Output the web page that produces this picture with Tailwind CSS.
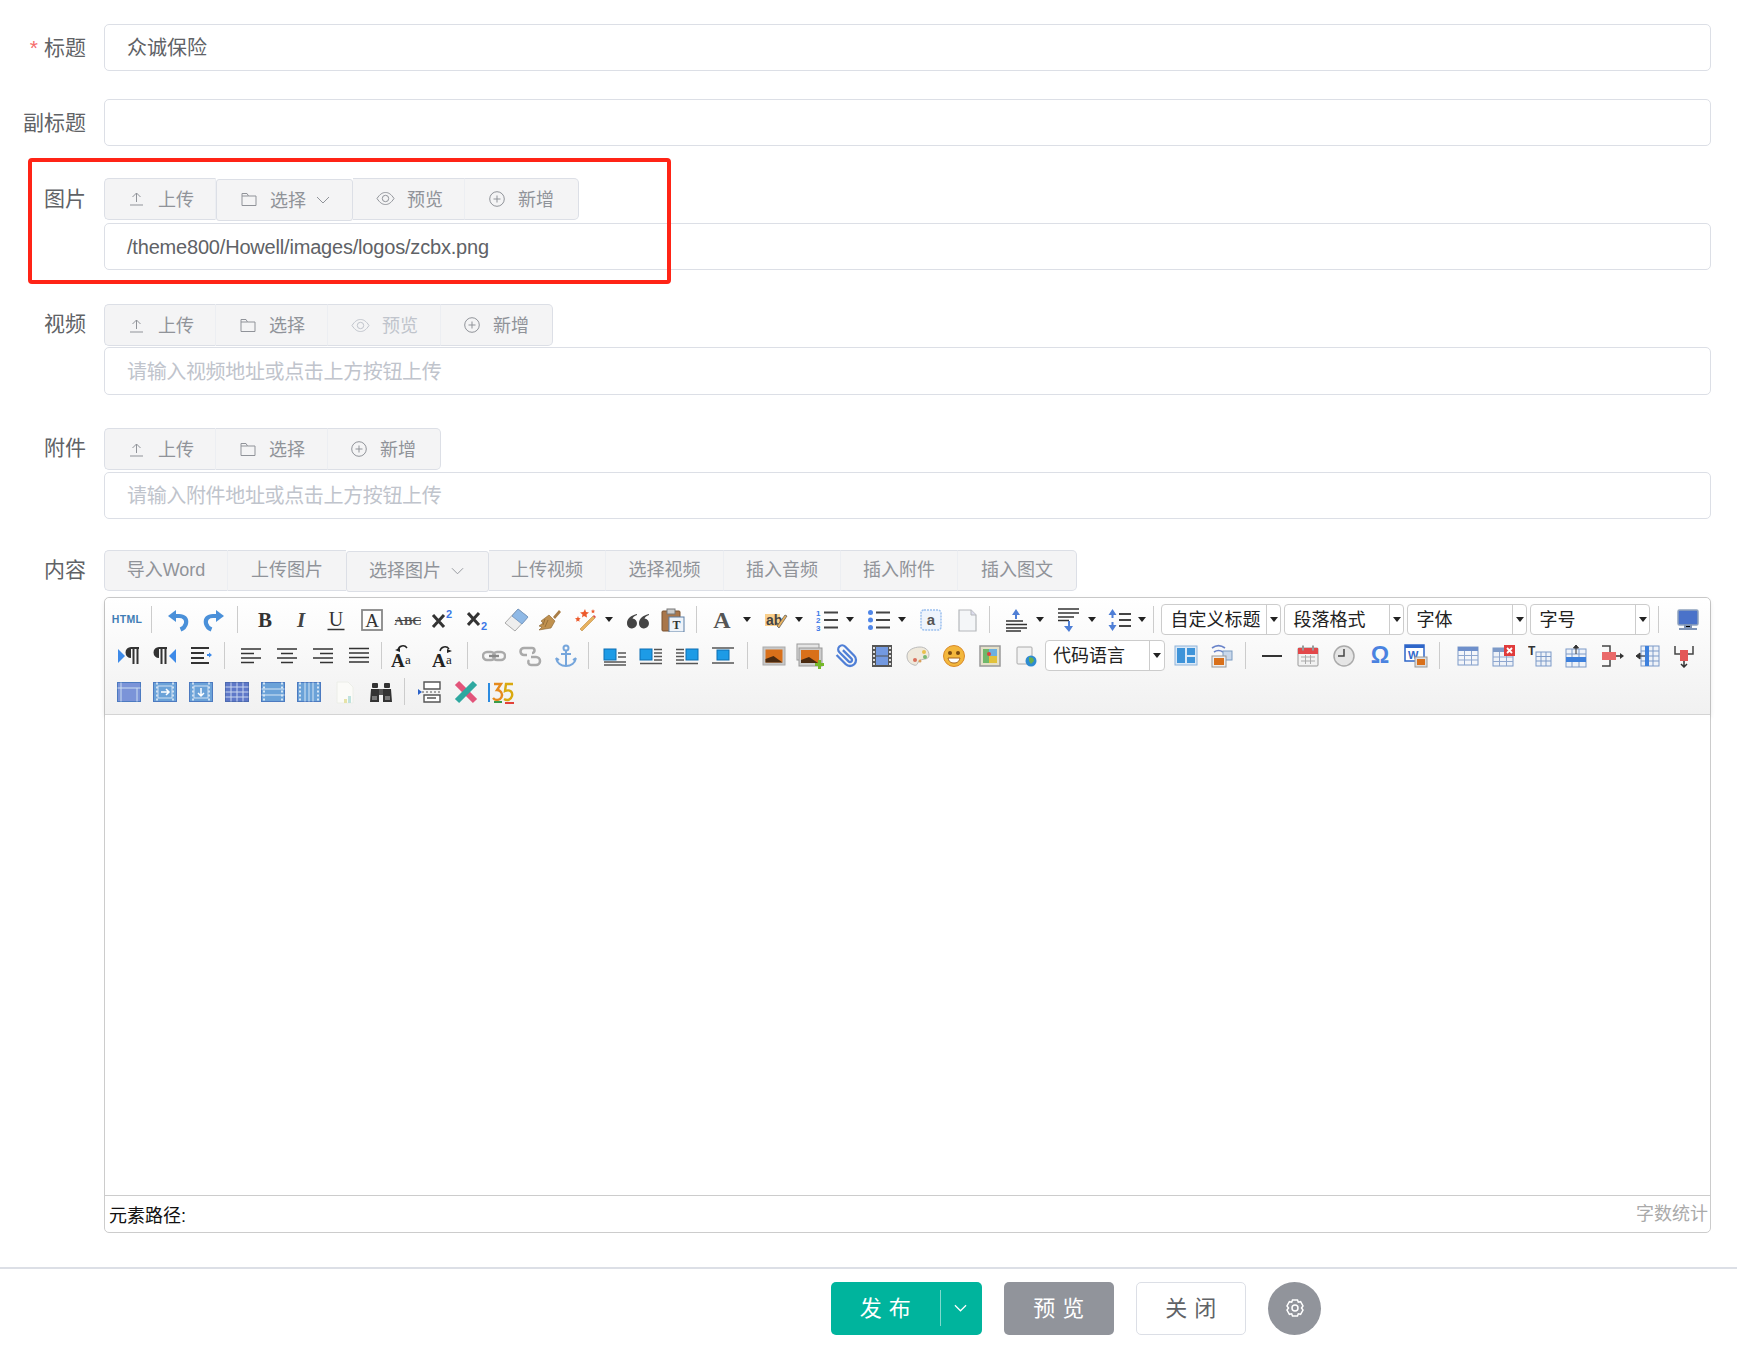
<!DOCTYPE html>
<html lang="zh-CN">
<head>
  <meta charset="UTF-8" />
  <title>编辑内容</title>
  <script src="https://cdn.jsdelivr.net/npm/@tailwindcss/browser@4"></script>
</head>
<body class="bg-white h-[1347px] overflow-hidden [font-family:'Liberation_Sans','Noto_Sans_CJK_SC',sans-serif]">

<main class="pr-[26px] pt-[23.5px]">

  <!-- 标题 -->
  <div class="flex">
    <label class="shrink-0 w-[86px] text-right text-[21px] leading-[47px] text-[#606266]"><span class="text-[#f56c6c] mr-[6px]">*</span>标题</label>
    <div class="ml-[18px] flex-1 min-w-0 h-[47px] border border-[#dcdfe6] rounded-[5px] pl-[22px] text-[20px] leading-[46px] text-[#606266]">众诚保险</div>
  </div>

  <!-- 副标题 -->
  <div class="flex mt-[28.5px]">
    <label class="shrink-0 w-[86px] text-right text-[21px] leading-[47px] text-[#606266]">副标题</label>
    <div class="ml-[18px] flex-1 min-w-0 h-[47px] border border-[#dcdfe6] rounded-[5px]"></div>
  </div>

  <!-- 图片 -->
  <div class="relative flex mt-[31.5px]">
    <div class="absolute left-[28px] -top-[20px] w-[643px] h-[126px] border-[4px] border-[#ff2416] rounded-[4px] pointer-events-none"></div>
    <label class="shrink-0 w-[86px] text-right text-[21px] leading-[42px] text-[#606266]">图片</label>
    <div class="ml-[18px] flex-1 min-w-0">
      <div class="flex h-[42px] text-[18px] text-[#909399]">
        <button class="flex items-center w-[112px] pl-[24px] bg-[#f4f4f5] border border-[#dcdfe6] border-r-[#eceef2] rounded-l-[5px]">
          <svg class="w-[15px] h-[15px] mr-[14px]" viewBox="0 0 15 15" fill="none" stroke="#909399"><path d="M1 14h13M7.5 11V2M3.500 6l4-4 4 4"/></svg><span class="mt-[4px]">上传</span></button>
        <button class="flex items-center w-[137px] pl-[24px] translate-y-px bg-[#f4f4f5] border border-[#dcdfe6] rounded-[3px]">
          <svg class="w-[16px] h-[15px] mr-[13px]" viewBox="0 0 16 15" fill="none" stroke="#909399"><path d="M1 13.500V1.500h5l1.500 2.500h7.500v9.500zM1 4h6.500"/></svg><span class="mt-[4px]">选择</span>
          <svg class="w-[14px] h-[8px] ml-[10px]" viewBox="0 0 14 8" fill="none" stroke="#909399"><path d="M1 1l6 6 6-6"/></svg></button>
        <button class="flex items-center w-[112px] pl-[23px] bg-[#f4f4f5] border-y border-r border-[#dcdfe6] border-r-[#eceef2]">
          <svg class="w-[19px] h-[15px] mr-[12px]" viewBox="0 0 19 15" fill="none" stroke="#909399"><path d="M1 7.500C4 3 6.500 1.500 9.500 1.500S15 3 18 7.500C15 12 12.500 13.500 9.500 13.500S4 12 1 7.500z"/><circle cx="9.500" cy="7.500" r="3.200"/></svg><span class="mt-[4px]">预览</span></button>
        <button class="flex items-center w-[114px] pl-[24px] bg-[#f4f4f5] border-y border-r border-[#dcdfe6] rounded-r-[5px]">
          <svg class="w-[16px] h-[16px] mr-[13px]" viewBox="0 0 16 16" fill="none" stroke="#909399"><circle cx="8" cy="8" r="7.300"/><path d="M8 4.500v7M4.500 8h7"/></svg><span class="mt-[4px]">新增</span></button>
      </div>
      <div class="mt-[3.5px] h-[47px] border border-[#dcdfe6] rounded-[5px] pl-[22px] text-[20px] tracking-[-0.19px] leading-[46px] text-[#606266]">/theme800/Howell/images/logos/zcbx.png</div>
    </div>
  </div>

  <!-- 视频 -->
  <div class="flex mt-[34px]">
    <label class="shrink-0 w-[86px] text-right text-[21px] leading-[40px] text-[#606266]">视频</label>
    <div class="ml-[18px] flex-1 min-w-0">
      <div class="flex h-[42px] text-[18px] text-[#909399]">
        <button class="flex items-center w-[112px] pl-[24px] bg-[#f4f4f5] border border-[#dcdfe6] border-r-[#eceef2] rounded-l-[5px]">
          <svg class="w-[15px] h-[15px] mr-[14px]" viewBox="0 0 15 15" fill="none" stroke="#909399"><path d="M1 14h13M7.500 11V2M3.500 6l4-4 4 4"/></svg><span class="mt-[2px]">上传</span></button>
        <button class="flex items-center w-[112px] pl-[24px] bg-[#f4f4f5] border-y border-r border-[#dcdfe6] border-r-[#eceef2]">
          <svg class="w-[16px] h-[15px] mr-[13px]" viewBox="0 0 16 15" fill="none" stroke="#909399"><path d="M1 13.500V1.500h5l1.500 2.500h7.500v9.500zM1 4h6.500"/></svg><span class="mt-[2px]">选择</span></button>
        <button class="flex items-center w-[113px] pl-[23px] bg-[#f4f4f5] border-y border-r border-[#dcdfe6] border-r-[#eceef2] text-[#c0c4cc]">
          <svg class="w-[19px] h-[15px] mr-[12px]" viewBox="0 0 19 15" fill="none" stroke="#c0c4cc"><path d="M1 7.500C4 3 6.500 1.500 9.500 1.500S15 3 18 7.500C15 12 12.500 13.500 9.500 13.500S4 12 1 7.500z"/><circle cx="9.500" cy="7.500" r="3.200"/></svg><span class="mt-[2px]">预览</span></button>
        <button class="flex items-center w-[112px] pl-[23px] bg-[#f4f4f5] border-y border-r border-[#dcdfe6] rounded-r-[5px]">
          <svg class="w-[16px] h-[16px] mr-[13px]" viewBox="0 0 16 16" fill="none" stroke="#909399"><circle cx="8" cy="8" r="7.300"/><path d="M8 4.500v7M4.500 8h7"/></svg><span class="mt-[2px]">新增</span></button>
      </div>
      <div class="mt-px h-[47.5px] border border-[#dcdfe6] rounded-[5px] pl-[22px] text-[20px] tracking-[-0.35px] leading-[48px] text-[#c0c4cc]">请输入视频地址或点击上方按钮上传</div>
    </div>
  </div>

  <!-- 附件 -->
  <div class="flex mt-[33.5px]">
    <label class="shrink-0 w-[86px] text-right text-[21px] leading-[40px] text-[#606266]">附件</label>
    <div class="ml-[18px] flex-1 min-w-0">
      <div class="flex h-[42px] text-[18px] text-[#909399]">
        <button class="flex items-center w-[112px] pl-[24px] bg-[#f4f4f5] border border-[#dcdfe6] border-r-[#eceef2] rounded-l-[5px]">
          <svg class="w-[15px] h-[15px] mr-[14px]" viewBox="0 0 15 15" fill="none" stroke="#909399"><path d="M1 14h13M7.500 11V2M3.500 6l4-4 4 4"/></svg><span class="mt-[2px]">上传</span></button>
        <button class="flex items-center w-[112px] pl-[24px] bg-[#f4f4f5] border-y border-r border-[#dcdfe6] border-r-[#eceef2]">
          <svg class="w-[16px] h-[15px] mr-[13px]" viewBox="0 0 16 15" fill="none" stroke="#909399"><path d="M1 13.500V1.500h5l1.500 2.500h7.500v9.500zM1 4h6.500"/></svg><span class="mt-[2px]">选择</span></button>
        <button class="flex items-center w-[113px] pl-[23px] bg-[#f4f4f5] border-y border-r border-[#dcdfe6] rounded-r-[5px]">
          <svg class="w-[16px] h-[16px] mr-[13px]" viewBox="0 0 16 16" fill="none" stroke="#909399"><circle cx="8" cy="8" r="7.300"/><path d="M8 4.500v7M4.500 8h7"/></svg><span class="mt-[2px]">新增</span></button>
      </div>
      <div class="mt-[1.5px] h-[47px] border border-[#dcdfe6] rounded-[5px] pl-[22px] text-[20px] tracking-[-0.35px] leading-[46px] text-[#c0c4cc]">请输入附件地址或点击上方按钮上传</div>
    </div>
  </div>

  <!-- 内容 -->
  <div class="flex mt-[31px]">
    <label class="shrink-0 w-[86px] text-right text-[21px] leading-[40px] text-[#606266]">内容</label>
    <div class="ml-[18px] flex-1 min-w-0">
      <div class="flex h-[41px] text-[18px] text-[#909399]">
        <button class="w-[124px] bg-[#f4f4f5] border border-[#dcdfe6] border-r-[#eceef2] rounded-l-[5px]">导入Word</button>
        <button class="w-[118px] bg-[#f4f4f5] border-y border-[#dcdfe6]">上传图片</button>
        <button class="flex items-center w-[143px] pl-[22px] translate-y-px bg-[#f4f4f5] border border-[#dcdfe6] rounded-[3px]">选择图片
          <svg class="w-[13px] h-[8px] ml-[10px]" viewBox="0 0 14 8" fill="none" stroke="#909399"><path d="M1 1l6 6 6-6"/></svg></button>
        <button class="w-[117px] bg-[#f4f4f5] border-y border-r border-[#dcdfe6] border-r-[#eceef2]">上传视频</button>
        <button class="w-[118px] bg-[#f4f4f5] border-y border-r border-[#dcdfe6] border-r-[#eceef2]">选择视频</button>
        <button class="w-[117px] bg-[#f4f4f5] border-y border-r border-[#dcdfe6] border-r-[#eceef2]">插入音频</button>
        <button class="w-[117px] bg-[#f4f4f5] border-y border-r border-[#dcdfe6] border-r-[#eceef2]">插入附件</button>
        <button class="w-[119px] bg-[#f4f4f5] border-y border-r border-[#dcdfe6] rounded-r-[5px]">插入图文</button>
      </div>

      <!-- UEditor -->
      <div class="mt-[6px] h-[636px] flex flex-col border border-[#ccc] rounded-[5px]">
        <div class="h-[117px] pl-[4px] pt-[4px] rounded-t-[5px] bg-gradient-to-b from-white to-[#f1f1f1] border-b border-[#d4d4d4] shadow-[0_2px_5px_rgba(0,0,0,0.12)]">

          <!-- row 1 -->
          <div class="flex items-center h-[36px]">
            <span class="flex w-[36px] justify-center text-[10.500px] font-bold tracking-[0.300px] text-[#3f7cb5]">HTML</span>
            <span class="ml-[6px] mr-[8px] h-[27px] w-px bg-[#ccc]"></span>
            <span class="flex w-[36px] justify-center"><svg class="w-6 h-6" viewBox="0 0 24 24" fill="none"><path d="M8 8h5c5 0 8 3 7 7.500-.6 2.500-3 5-5.500 6" stroke="#4a90d9" stroke-width="4.200"/><path d="M2 8l8-6v12z" fill="#4a90d9"/></svg></span>
            <span class="flex w-[36px] justify-center"><svg class="w-6 h-6" viewBox="0 0 24 24" fill="none"><path d="M16 8h-5c-5 0-8 3-7 7.500.6 2.500 3 5 5.500 6" stroke="#4a90d9" stroke-width="4.200"/><path d="M22 8l-8-6v12z" fill="#4a90d9"/></svg></span>
            <span class="ml-[5px] mr-[9px] h-[27px] w-px bg-[#ccc]"></span>
            <span class="flex w-[35.700px] justify-center"><svg class="w-6 h-6 overflow-visible" viewBox="0 0 24 24"><text x="12" y="19" font-size="21" font-weight="bold" text-anchor="middle" font-family="Liberation Serif" fill="#333">B</text></svg></span>
            <span class="flex w-[35.700px] justify-center"><svg class="w-6 h-6 overflow-visible" viewBox="0 0 24 24"><text x="12" y="19" font-size="21" font-weight="bold" font-style="italic" text-anchor="middle" font-family="Liberation Serif" fill="#444">I</text></svg></span>
            <span class="flex w-[35.700px] justify-center"><svg class="w-6 h-6 overflow-visible" viewBox="0 0 24 24"><text x="12" y="18" font-size="20" text-anchor="middle" font-family="Liberation Serif" fill="#333">U</text><path d="M3.500 21.500h17" stroke="#333" stroke-width="1.500"/></svg></span>
            <span class="flex w-[35.700px] justify-center"><svg class="w-6 h-6 overflow-visible" viewBox="0 0 24 24"><rect x="2" y="2" width="20" height="20" fill="none" stroke="#888" stroke-width="1.800"/><text x="12" y="19" font-size="19" text-anchor="middle" font-family="Liberation Serif" fill="#333">A</text></svg></span>
            <span class="flex w-[35.700px] justify-center"><svg class="w-[30px] h-6 overflow-visible" viewBox="0 0 30 24"><text x="15" y="17" font-size="13" font-weight="bold" text-anchor="middle" font-family="Liberation Serif" fill="#555">ABC</text><path d="M2 12.500h26" stroke="#444"/></svg></span>
            <span class="flex w-[35.700px] justify-center"><svg class="w-6 h-6" viewBox="0 0 24 24"><path d="M2 7l11 12M13 7L2 19" stroke="#333" stroke-width="3"/><text x="15" y="10" font-size="11" font-weight="bold" fill="#3b78e7">2</text></svg></span>
            <span class="flex w-[35.700px] justify-center"><svg class="w-6 h-6" viewBox="0 0 24 24"><path d="M1 5l11 12M12 5L1 17" stroke="#333" stroke-width="3"/><text x="14" y="22" font-size="11" font-weight="bold" fill="#3b78e7">2</text></svg></span>
            <span class="flex w-[35.700px] justify-center"><svg class="w-7 h-6" viewBox="0 0 28 24"><path d="M17 1l10 8-13 14-10-8z" fill="#eee" stroke="#aaa"/><path d="M17 1l10 8-6 7-10-8z" fill="#8fb9e6" stroke="#7a9cc4"/></svg></span>
            <span class="flex w-[35.700px] justify-center"><svg class="w-6 h-6" viewBox="0 0 24 24"><path d="M15 9l6-7 2 2-6 7z" fill="#a97c45"/><path d="M11 7l6 6-4 7-12 2 3-3-3-1 4-3-2-2z" fill="#c0914f" stroke="#86622f" stroke-width=".6"/><path d="M7 11l-2 6M10 12l-3 7" stroke="#86622f" stroke-width=".7"/></svg></span>
            <span class="flex w-[35.700px] justify-center"><svg class="w-6 h-6" viewBox="0 0 24 24"><path d="M6 21l13-13 2 2L8 23z" fill="#e8b15e" stroke="#b07c2c" stroke-width=".5"/><path d="M19 8l2 2 1-1-2-2z" fill="#e24a4a"/><path d="M11 1l1 3 3 .5-2.500 2 .5 3-3-1.500-2 1.500.5-3L6 4.500 9.500 4zM4 8l.7 2 2 .3-1.500 1.400.4 2L4 12.700l-1.800 1 .4-2L1 10.300l2.200-.3zM19 1l.5 1.500 1.500.2-1 1 .3 1.500-1.300-.7-1.300.7.300-1.500-1-1 1.500-.2z" fill="#ed5a2c"/></svg></span>
            <span class="ml-px mr-[7px] w-0 h-0 border-x-[4px] border-t-[5px] border-x-transparent border-t-[#222]"></span>
            <span class="flex w-[35.700px] justify-center"><svg class="w-6 h-6" viewBox="0 0 24 24" fill="#444"><path d="M11 6C6 7 1 10 1 15a5 5 0 1 0 5.500-4.500c.6-1.500 2-2.800 4.500-3.500z"/><path d="M23 6c-5 1-10 4-10 9a5 5 0 1 0 5.500-4.500c.6-1.500 2-2.800 4.500-3.500z"/></svg></span>
            <span class="flex w-[35.700px] justify-center"><svg class="w-6 h-6" viewBox="0 0 24 24"><rect x="1" y="3" width="18" height="20" rx="1" fill="#a9764a" stroke="#7a5230"/><rect x="6" y="1" width="8" height="5" fill="#ccc" stroke="#777"/><rect x="8" y="9" width="15" height="15" fill="#eef3f9" stroke="#5c7ea5"/><text x="15.500" y="21" font-size="12" font-weight="bold" text-anchor="middle" fill="#333" font-family="Liberation Serif">T</text></svg></span>
            <span class="ml-[5px] mr-[9px] h-[27px] w-px bg-[#ccc]"></span>
            <span class="flex w-[35.700px] justify-center"><svg class="w-6 h-6 overflow-visible" viewBox="0 0 24 24"><text x="10" y="20" font-size="24" font-weight="bold" text-anchor="middle" font-family="Liberation Serif" fill="#555">A</text></svg></span>
            <span class="ml-px mr-[7px] w-0 h-0 border-x-[4px] border-t-[5px] border-x-transparent border-t-[#222]"></span>
            <span class="flex w-[35.700px] justify-center"><svg class="w-6 h-6" viewBox="0 0 24 24"><rect x="1" y="6" width="15" height="12" fill="#f9cf8c"/><text x="2" y="17" font-size="14" font-weight="bold" fill="#444">ab</text><path d="M15 20l8-12-2-1-8 11z" fill="#e8b15e" stroke="#555" stroke-width=".7"/></svg></span>
            <span class="ml-px mr-[7px] w-0 h-0 border-x-[4px] border-t-[5px] border-x-transparent border-t-[#222]"></span>
            <span class="flex w-[35.700px] justify-center"><svg class="w-6 h-6" viewBox="0 0 24 24"><path d="M9 4.500h14M9 12h14M9 19.500h14" stroke="#444" stroke-width="1.800"/><text x="1" y="8" font-size="8" font-weight="bold" fill="#3b78e7">1</text><text x="1" y="15" font-size="8" font-weight="bold" fill="#3b78e7">2</text><text x="1" y="23" font-size="8" font-weight="bold" fill="#3b78e7">3</text></svg></span>
            <span class="ml-px mr-[7px] w-0 h-0 border-x-[4px] border-t-[5px] border-x-transparent border-t-[#222]"></span>
            <span class="flex w-[35.700px] justify-center"><svg class="w-6 h-6" viewBox="0 0 24 24"><path d="M9 4.500h14M9 12h14M9 19.500h14" stroke="#444" stroke-width="1.800"/><circle cx="3.500" cy="4.500" r="2.500" fill="#4f86e8"/><circle cx="3.500" cy="12" r="2.500" fill="#4f86e8"/><circle cx="3.500" cy="19.500" r="2.500" fill="#4f86e8"/></svg></span>
            <span class="ml-px mr-[7px] w-0 h-0 border-x-[4px] border-t-[5px] border-x-transparent border-t-[#222]"></span>
            <span class="flex w-[35.700px] justify-center"><svg class="w-6 h-6" viewBox="0 0 24 24"><rect x="2" y="2" width="20" height="20" rx="3" fill="#eef4fc" stroke="#9cc0ee" stroke-width="1.500" stroke-dasharray="2 1"/><text x="12" y="17" font-size="15" font-weight="bold" text-anchor="middle" fill="#555">a</text></svg></span>
            <span class="flex w-[35.700px] justify-center"><svg class="w-6 h-6" viewBox="0 0 24 24"><path d="M4 2h12l5 5v16H4z" fill="#f4f6f8" stroke="#b5b8bb" stroke-width="1.200"/><path d="M16 2v5h5" fill="#dde" stroke="#b5b8bb"/></svg></span>
            <span class="ml-[5px] mr-[9px] h-[27px] w-px bg-[#ccc]"></span>
            <span class="flex w-[35.700px] justify-center"><svg class="w-6 h-6" viewBox="0 0 24 24"><path d="M1 13h17M1 16.500h21M1 20h21M1 23h15" stroke="#333" stroke-width="1.500"/><path d="M11 1l4 6h-3v4h-2V7H7z" fill="#4f7fd6"/></svg></span>
            <span class="ml-px mr-[7px] w-0 h-0 border-x-[4px] border-t-[5px] border-x-transparent border-t-[#222]"></span>
            <span class="flex w-[35.700px] justify-center"><svg class="w-6 h-6" viewBox="0 0 24 24"><path d="M1 1h21M1 5h21M1 9h16M1 12.500h11" stroke="#333" stroke-width="1.500"/><path d="M12 24l4-6h-3v-5h-2v5H7z" fill="#4f7fd6"/></svg></span>
            <span class="ml-px mr-[7px] w-0 h-0 border-x-[4px] border-t-[5px] border-x-transparent border-t-[#222]"></span>
            <span class="-ml-[1px] flex w-[35.700px] justify-center"><svg class="w-6 h-6" viewBox="0 0 24 24"><path d="M11 6h12M11 12h12M11 18h12" stroke="#444" stroke-width="1.800"/><path d="M4.500 1l4 6h-3v3h-2V7h-3zM4.500 23l4-6h-3v-3h-2v3h-3z" fill="#4f7fd6"/></svg></span>
            <span class="ml-px mr-[4px] w-0 h-0 border-x-[4px] border-t-[5px] border-x-transparent border-t-[#222]"></span>
            <span class="ml-[3px] mr-[7px] h-[27px] w-px bg-[#ccc]"></span>

            <div class="flex shrink-0 w-[120px] h-[31px] bg-white border border-[#ccc] rounded-[4px]"><span class="flex-1 pl-[8px] text-[18px] leading-[31px] text-[#222]">自定义标题</span><span class="flex w-[14px] items-center justify-center border-l border-[#ccc]"><span class="w-0 h-0 border-x-[4px] border-t-[5px] border-x-transparent border-t-[#222]"></span></span></div>
            <div class="flex shrink-0 ml-[3px] w-[120px] h-[31px] bg-white border border-[#ccc] rounded-[4px]"><span class="flex-1 pl-[8px] text-[18px] leading-[31px] text-[#222]">段落格式</span><span class="flex w-[14px] items-center justify-center border-l border-[#ccc]"><span class="w-0 h-0 border-x-[4px] border-t-[5px] border-x-transparent border-t-[#222]"></span></span></div>
            <div class="flex shrink-0 ml-[3px] w-[120px] h-[31px] bg-white border border-[#ccc] rounded-[4px]"><span class="flex-1 pl-[8px] text-[18px] leading-[31px] text-[#222]">字体</span><span class="flex w-[14px] items-center justify-center border-l border-[#ccc]"><span class="w-0 h-0 border-x-[4px] border-t-[5px] border-x-transparent border-t-[#222]"></span></span></div>
            <div class="flex shrink-0 ml-[3px] w-[120px] h-[31px] bg-white border border-[#ccc] rounded-[4px]"><span class="flex-1 pl-[8px] text-[18px] leading-[31px] text-[#222]">字号</span><span class="flex w-[14px] items-center justify-center border-l border-[#ccc]"><span class="w-0 h-0 border-x-[4px] border-t-[5px] border-x-transparent border-t-[#222]"></span></span></div>
            <span class="ml-[8px] mr-[11px] h-[27px] w-px bg-[#ccc]"></span>
            <span class="flex w-[36px] justify-center"><svg class="w-6 h-6" viewBox="0 0 24 24"><rect x="2" y="2" width="20" height="15" rx="1.500" fill="#4a72c9" stroke="#8fa2bd" stroke-width="1.500"/><path d="M9 17h6v3H9zM3 21h18" stroke="#7e93b5" stroke-width="2"/></svg></span>
          </div>

          <!-- row 2 -->
          <div class="flex items-center h-[36px] pl-[1.500px]">
            <span class="flex w-[36px] justify-center"><svg class="w-6 h-6" viewBox="0 0 24 24"><path d="M1 5l7 7-7 7z" fill="#3d8ae8"/><path d="M14 4a4.500 4.500 0 0 0 0 9M14 4h8M16.500 4v16M20.500 4v16" fill="#333" stroke="#333" stroke-width="2"/></svg></span>
            <span class="flex w-[36px] justify-center"><svg class="w-6 h-6" viewBox="0 0 24 24"><path d="M23 5l-7 7 7 7z" fill="#3d8ae8"/><path d="M6 4a4.500 4.500 0 0 0 0 9M6 4h8M8.500 4v16M12.500 4v16" fill="#333" stroke="#333" stroke-width="2"/></svg></span>
            <span class="flex w-[36px] justify-center"><svg class="w-6 h-6" viewBox="0 0 24 24"><path d="M2 4h18M2 9h13M2 14h13M2 19h18" stroke="#333" stroke-width="2"/><path d="M20 8.500v1.500h-2v2h2v1.500l3-2.500z" fill="#3d8ae8"/></svg></span>
            <span class="ml-[5.500px] mr-[7.500px] h-[27px] w-px bg-[#ccc]"></span>
            <span class="flex w-[36px] justify-center"><svg class="w-6 h-6" viewBox="0 0 24 24"><path d="M2 5h20M2 9.500h13M2 14h20M2 18.500h13" stroke="#333" stroke-width="1.700"/></svg></span>
            <span class="flex w-[36px] justify-center"><svg class="w-6 h-6" viewBox="0 0 24 24"><path d="M2 5h20M6 9.500h12M2 14h20M6 18.500h12" stroke="#333" stroke-width="1.700"/></svg></span>
            <span class="flex w-[36px] justify-center"><svg class="w-6 h-6" viewBox="0 0 24 24"><path d="M2 5h20M9 9.500h13M2 14h20M9 18.500h13" stroke="#333" stroke-width="1.700"/></svg></span>
            <span class="flex w-[36px] justify-center"><svg class="w-6 h-6" viewBox="0 0 24 24"><path d="M2 4.500h20M2 9h20M2 13.500h20M2 18h20" stroke="#333" stroke-width="1.700"/></svg></span>
            <span class="ml-[4.500px] h-[27px] w-px bg-[#ccc]"></span>
            <span class="flex w-[41px] justify-center"><svg class="w-6 h-6" viewBox="0 0 24 24"><path d="M7 6a5 5 0 0 1 9-2" fill="none" stroke="#222" stroke-width="1.500"/><path d="M4 6l5-2v4z" fill="#222"/><text x="0" y="23" font-size="19" font-weight="bold" font-family="Liberation Serif" fill="#222">A</text><text x="14" y="20" font-size="13" font-family="Liberation Serif" fill="#222">a</text></svg></span>
            <span class="flex w-[42px] justify-center"><svg class="w-6 h-6" viewBox="0 0 24 24"><path d="M7 6a5 5 0 0 1 9-2" fill="none" stroke="#222" stroke-width="1.500" transform="translate(1 1)"/><path d="M20 7l-5-2v4z" fill="#222"/><text x="0" y="23" font-size="19" font-weight="bold" font-family="Liberation Serif" fill="#222">A</text><text x="14" y="20" font-size="13" font-family="Liberation Serif" fill="#222">a</text></svg></span>
            <span class="ml-[1.500px] mr-[8px] h-[27px] w-px bg-[#ccc]"></span>
            <span class="flex w-[36px] justify-center"><svg class="w-6 h-6" viewBox="0 0 24 24" fill="none" stroke="#aaa" stroke-width="2.400"><rect x="1" y="8" width="12" height="8" rx="4"/><rect x="11" y="8" width="12" height="8" rx="4"/><path d="M7 12h10" stroke="#888"/></svg></span>
            <span class="flex w-[36px] justify-center"><svg class="w-6 h-6" viewBox="0 0 24 24" fill="none" stroke="#aaa" stroke-width="2.600"><path d="M11 4H6a3 3 0 0 0 0 7h3M13 13h5a3.500 3.500 0 0 1 0 8h-5a3 3 0 0 1-2-5M8 4h6a2 2 0 0 1 0 5"/></svg></span>
            <span class="flex w-[36px] justify-center"><svg class="w-6 h-6" viewBox="0 0 24 24" fill="none" stroke="#76a6dc" stroke-width="2"><circle cx="12" cy="4" r="2.500"/><path d="M12 6.500V22M7 10h10M2 14c1 5 5 8 10 8s9-3 10-8M2 14l3 2M22 14l-3 2"/></svg></span>
            <span class="ml-[4.500px] mr-[8px] h-[27px] w-px bg-[#ccc]"></span>
            <span class="flex w-[36px] justify-center"><svg class="w-6 h-6" viewBox="0 0 24 24"><rect x="1" y="5" width="12" height="11" fill="#1d9be6" stroke="#0c6fb3"/><path d="M15 13h8M1 18h22M15 9h8M1 21h22" stroke="#555" stroke-width="1.400"/></svg></span>
            <span class="flex w-[36px] justify-center"><svg class="w-6 h-6" viewBox="0 0 24 24"><rect x="1" y="5" width="12" height="11" fill="#1d9be6" stroke="#0c6fb3"/><path d="M15 5.500h8M15 9h8M15 12.500h8M15 16h8M1 19.500h22" stroke="#555" stroke-width="1.400"/></svg></span>
            <span class="flex w-[36px] justify-center"><svg class="w-6 h-6" viewBox="0 0 24 24"><rect x="11" y="5" width="12" height="11" fill="#1d9be6" stroke="#0c6fb3"/><path d="M1 5.500h8M1 9h8M1 12.500h8M1 16h8M1 19.500h22" stroke="#555" stroke-width="1.400"/></svg></span>
            <span class="flex w-[36px] justify-center"><svg class="w-6 h-6" viewBox="0 0 24 24"><path d="M1 4h22M1 19h22" stroke="#555" stroke-width="1.400"/><rect x="6" y="6" width="12" height="10" fill="#1d9be6" stroke="#0c6fb3"/></svg></span>
            <span class="ml-[5.500px] mr-[8px] h-[27px] w-px bg-[#ccc]"></span>
            <span class="flex w-[36px] justify-center"><svg class="w-6 h-6" viewBox="0 0 24 24"><rect x="1" y="3" width="22" height="18" fill="#c8c8c8" stroke="#aaa"/><rect x="3.500" y="5.500" width="17" height="13" fill="#d9701a"/><path d="M3.500 15l8-3 9 6.500H3.500z" fill="#4a2a10"/></svg></span>
            <span class="flex w-[36px] justify-center"><svg class="w-7 h-7" viewBox="0 0 28 28"><rect x="1" y="2" width="22" height="16" fill="#e5e5e5" stroke="#999"/><rect x="3" y="6" width="23" height="18" fill="#ccc" stroke="#999"/><rect x="5" y="8" width="18" height="13" fill="#d9701a"/><path d="M5 18l8-3 9 6H5z" fill="#4a2a10"/><path d="M19 21h3v-3h3v3h3v3h-3v3h-3v-3h-3z" fill="#76b82a"/></svg></span>
            <span class="flex w-[36px] justify-center"><svg class="w-6 h-6" viewBox="0 0 24 24" fill="none"><path d="M21.440 11.050l-9.190 9.190a6 6 0 0 1-8.490-8.490l9.190-9.190a4 4 0 0 1 5.660 5.660l-9.200 9.190a2 2 0 0 1-2.830-2.830l8.490-8.480" transform="matrix(-1 0 0 1 24 0)" stroke="#4f7fd6" stroke-width="2.300"/></svg></span>
            <span class="flex w-[36px] justify-center"><svg class="w-6 h-6" viewBox="0 0 24 24"><rect x="2" y="1" width="20" height="22" fill="#555"/><rect x="6" y="3" width="12" height="8.500" fill="#7399e0"/><rect x="6" y="12.500" width="12" height="8.500" fill="#7399e0"/><path d="M4 3v18M20 3v18" stroke="#ddd" stroke-width="2" stroke-dasharray="2 2"/></svg></span>
            <span class="flex w-[36px] justify-center"><svg class="w-6 h-6" viewBox="0 0 24 24"><path d="M1 12c0-6 7-9 13-9 5 0 9 3 9 8 0 6-8 3-10 6-2 3-2 5-5 4-3-1-7-3-7-9z" fill="#efe9dc" stroke="#bbb"/><circle cx="18" cy="8" r="2" fill="#eac04d"/><circle cx="19" cy="13" r="2" fill="#7ab872"/><circle cx="9" cy="16" r="2" fill="#d9705c"/><circle cx="14" cy="17" r="1.500" fill="#d9a05c"/></svg></span>
            <span class="flex w-[36px] justify-center"><svg class="w-6 h-6" viewBox="0 0 24 24"><circle cx="12" cy="12" r="10.500" fill="#f3b73c" stroke="#d98a2a"/><circle cx="8" cy="9" r="2" fill="#7a4a10"/><circle cx="16" cy="9" r="2" fill="#7a4a10"/><path d="M6 14h12c-1 4-3 5-6 5s-5-1-6-5z" fill="#fff" stroke="#a5641d"/></svg></span>
            <span class="flex w-[36px] justify-center"><svg class="w-6 h-6" viewBox="0 0 24 24"><rect x="2" y="2" width="20" height="20" fill="#e4e0c8" stroke="#999" stroke-width="1.500"/><rect x="5" y="5" width="6" height="14" fill="#6fb86a"/><rect x="11" y="5" width="8" height="7" fill="#6db0e0"/><rect x="11" y="12" width="8" height="7" fill="#e2c23a"/><circle cx="11" cy="10" r="2" fill="#e2423a"/></svg></span>
            <span class="flex w-[36px] justify-center"><svg class="w-6 h-6" viewBox="0 0 24 24"><rect x="3" y="3" width="15" height="17" rx="1" fill="#f2f2f2" stroke="#aaa"/><circle cx="17" cy="17" r="5.500" fill="#2e8bd0"/><path d="M15 13l4 1 1 3-3 3-2-3z" fill="#6ab04c"/></svg></span>
            <div class="flex shrink-0 ml-[1.500px] w-[120px] h-[31px] bg-white border border-[#ccc] rounded-[4px]"><span class="flex-1 pl-[7px] text-[18px] leading-[31px] text-[#222]">代码语言</span><span class="flex w-[15px] items-center justify-center border-l border-[#ccc]"><span class="w-0 h-0 border-x-[4px] border-t-[5px] border-x-transparent border-t-[#222]"></span></span></div>
            <span class="ml-[2.500px] flex w-[36px] justify-center"><svg class="w-6 h-6" viewBox="0 0 24 24"><rect x="1" y="2" width="22" height="19" fill="#dbe9f7" stroke="#8fb4da"/><rect x="3" y="4" width="8" height="15" fill="#3f94d9"/><rect x="13" y="4" width="8" height="7" fill="#3f94d9"/><rect x="13" y="13" width="8" height="6" fill="#3f94d9"/></svg></span>
            <span class="flex w-[36px] justify-center"><svg class="w-6 h-6" viewBox="0 0 24 24" fill="none"><path d="M2 4c4-3 9-3 13 0M4 8c3-2 6-2 9 0" stroke="#6a84c9" stroke-width="1.600"/><rect x="13" y="7" width="9" height="9" fill="#c9d8ea" stroke="#7b9bc1"/><rect x="2" y="12" width="14" height="11" fill="#eee" stroke="#999"/><rect x="4" y="14" width="10" height="7" fill="#d9701a"/></svg></span>
            <span class="ml-[5.500px] mr-[8px] h-[27px] w-px bg-[#ccc]"></span>
            <span class="flex w-[36px] justify-center"><svg class="w-6 h-6" viewBox="0 0 24 24"><path d="M2 12h20" stroke="#333" stroke-width="2"/></svg></span>
            <span class="flex w-[36px] justify-center"><svg class="w-6 h-6" viewBox="0 0 24 24"><rect x="2" y="4" width="20" height="18" rx="1" fill="#f2f2f2" stroke="#999"/><rect x="2" y="4" width="20" height="6" fill="#e2474a"/><path d="M7 1.500v5M17 1.500v5" stroke="#999" stroke-width="2"/><path d="M5 13h14M5 17h14M9.500 11v9M14.500 11v9" stroke="#aaa"/></svg></span>
            <span class="flex w-[36px] justify-center"><svg class="w-6 h-6" viewBox="0 0 24 24" fill="none"><circle cx="12" cy="12" r="10" fill="#e5e5e5" stroke="#aaa" stroke-width="1.500"/><path d="M12 5v7H6" stroke="#444" stroke-width="1.500"/></svg></span>
            <span class="flex w-[36px] justify-center text-[23px] font-bold leading-none text-[#4a82e0]">Ω</span>
            <span class="flex w-[36px] justify-center"><svg class="w-6 h-6" viewBox="0 0 24 24"><rect x="1" y="1" width="19" height="16" fill="#fff" stroke="#2e66c9" stroke-width="1.500"/><rect x="1" y="1" width="19" height="3" fill="#2e66c9"/><text x="4" y="15" font-size="11" font-weight="bold" fill="#2e66c9">W</text><rect x="11" y="13" width="12" height="10" fill="#ddd" stroke="#999"/><rect x="13" y="15" width="8" height="6" fill="#d9701a"/></svg></span>
            <span class="ml-[4.500px] mr-[10px] h-[27px] w-px bg-[#ccc]"></span>
            <span class="flex w-[36px] justify-center"><svg class="w-[22px] h-[22px]" viewBox="0 0 22 22"><rect x="1" y="2" width="20" height="18" fill="#f4f6fa" stroke="#7d9ac8"/><rect x="1" y="2" width="20" height="4" fill="#6e8fcb"/><path d="M1 10.500h20M1 15h20M7.500 6v14M14.500 6v14" stroke="#8fa7cf"/></svg></span>
            <span class="flex w-[36px] justify-center"><svg class="w-6 h-6" viewBox="0 0 24 24"><rect x="1" y="4" width="20" height="18" fill="#eef2f8" stroke="#7d9ac8"/><rect x="1" y="4" width="20" height="4" fill="#7d9ac8"/><path d="M1 13h20M1 17.500h20M7.500 8v14M14.500 8v14" stroke="#8fa7cf"/><rect x="12" y="1" width="11" height="11" fill="#e03b3b"/><path d="M15 4l5 5M20 4l-5 5" stroke="#fff" stroke-width="1.800"/></svg></span>
            <span class="flex w-[36px] justify-center"><svg class="w-6 h-6" viewBox="0 0 24 24"><text x="0" y="11" font-size="12" font-weight="bold" fill="#333">T</text><rect x="8" y="8" width="15" height="14" fill="#eef2f8" stroke="#7d9ac8"/><path d="M8 12.500h15M8 17h15M13 8v14M18 8v14" stroke="#7d9ac8"/></svg></span>
            <span class="flex w-[36px] justify-center"><svg class="w-6 h-6" viewBox="0 0 24 24"><rect x="2" y="5" width="20" height="18" fill="#eef2f8" stroke="#7d9ac8"/><path d="M2 10h20M8 5v18M15 5v18" stroke="#7d9ac8"/><rect x="2" y="13" width="20" height="5" fill="#3d80dc"/><path d="M12 1l2.500 3h-5zM12 4v6" stroke="#333" fill="#333"/></svg></span>
            <span class="flex w-[36px] justify-center"><svg class="w-6 h-6" viewBox="0 0 24 24"><path d="M2 2h8v6M2 22h8v-6" fill="none" stroke="#444" stroke-width="1.500"/><rect x="2" y="8" width="14" height="8" fill="#ea6a6a"/><path d="M16 12h6" stroke="#333" stroke-width="1.500"/><path d="M24 12l-4-3v6z" fill="#333"/></svg></span>
            <span class="flex w-[36px] justify-center"><svg class="w-6 h-6" viewBox="0 0 24 24"><rect x="5" y="2" width="18" height="20" fill="#eef2f8" stroke="#7d9ac8"/><path d="M5 7h18M5 12h18M5 17h18M17 2v20" stroke="#7d9ac8"/><rect x="9" y="2" width="4" height="20" fill="#3d80dc"/><path d="M1 12h8M0 12l4-3v6z" stroke="#333" fill="#333"/></svg></span>
            <span class="flex w-[36px] justify-center"><svg class="w-6 h-6" viewBox="0 0 24 24"><path d="M3 2v8h18V2" fill="none" stroke="#444" stroke-width="1.500"/><rect x="8" y="6" width="8" height="11" fill="#e35757"/><path d="M12 17v5M9 20l3 3 3-3" stroke="#333" stroke-width="1.500" fill="none"/></svg></span>
          </div>

          <!-- row 3 -->
          <div class="flex items-center h-[36px] pl-[2px]">
            <span class="flex w-[36px] justify-center"><svg class="w-6 h-[20px]" viewBox="0 0 24 20"><rect x=".5" y=".5" width="23" height="19" fill="#7b94d8" stroke="#4c7ac0"/><path d="M.5 6h23M4 .5V6M4 6v13.500M20 6v13.500" stroke="#cfe0f2"/></svg></span>
            <span class="flex w-[36px] justify-center"><svg class="w-6 h-[20px]" viewBox="0 0 24 20"><rect x=".5" y=".5" width="23" height="19" fill="#6ba2d8" stroke="#4c7ac0"/><path d="M4 .5v19M20 .5v19" stroke="#cfe0f2" stroke-width="2" stroke-dasharray="2 2"/><rect x="5" y="4" width="14" height="12" fill="#6ba2d8" stroke="#cfe0f2"/><path d="M8 10h8M13 7l3 3-3 3" fill="none" stroke="#fff" stroke-width="1.500"/></svg></span>
            <span class="flex w-[36px] justify-center"><svg class="w-6 h-[20px]" viewBox="0 0 24 20"><rect x=".5" y=".5" width="23" height="19" fill="#6ba2d8" stroke="#4c7ac0"/><path d="M4 .5v19M20 .5v19" stroke="#cfe0f2" stroke-width="2" stroke-dasharray="2 2"/><rect x="5" y="4" width="14" height="12" fill="#6ba2d8" stroke="#cfe0f2"/><path d="M12 6v8M9 11l3 3 3-3" fill="none" stroke="#fff" stroke-width="1.500"/></svg></span>
            <span class="flex w-[36px] justify-center"><svg class="w-6 h-[20px]" viewBox="0 0 24 20"><rect x=".5" y=".5" width="23" height="19" fill="#5f78c8" stroke="#4c6ab0"/><path d="M.5 5h23M.5 10h23M.5 15h23M6 .5v19M12 .5v19M18 .5v19" stroke="#c9d6f0"/></svg></span>
            <span class="flex w-[36px] justify-center"><svg class="w-6 h-[20px]" viewBox="0 0 24 20"><rect x=".5" y=".5" width="23" height="19" fill="#6ba2d8" stroke="#4c7ac0"/><path d="M.5 7h23M.5 13h23" stroke="#d6e6f5"/><path d="M3 .5v19M21 .5v19" stroke="#d6e6f5" stroke-width="2" stroke-dasharray="2 2"/></svg></span>
            <span class="flex w-[36px] justify-center"><svg class="w-6 h-[20px]" viewBox="0 0 24 20"><rect x=".5" y=".5" width="23" height="19" fill="#6ba2d8" stroke="#4c7ac0"/><path d="M8 .5v19M12 .5v19M16 .5v19" stroke="#d6e6f5"/><path d="M3 .5v19M21 .5v19" stroke="#d6e6f5" stroke-width="2" stroke-dasharray="2 2"/></svg></span>
            <span class="flex w-[36px] justify-center"><svg class="w-6 h-6" viewBox="0 0 24 24"><path d="M4 2h11l5 5v16H4z" fill="#fbfbf8" stroke="#eceee8"/><path d="M11 19h3v4h-3z" fill="#e6e3a8"/><path d="M15 16h3v7h-3z" fill="#bfe2de"/></svg></span>
            <span class="flex w-[36px] justify-center"><svg class="w-6 h-6" viewBox="0 0 24 24" fill="#333"><rect x="3" y="3" width="6" height="5" rx="1"/><rect x="15" y="3" width="6" height="5" rx="1"/><path d="M2 9h8v13H1zM14 9h8l1 13h-9z"/><rect x="10" y="9" width="4" height="6" fill="#555"/><rect x="3" y="16" width="5" height="4" fill="#777"/><rect x="16" y="16" width="5" height="4" fill="#777"/></svg></span>
            <span class="ml-[5px] mr-[7px] h-[27px] w-px bg-[#ccc]"></span>
            <span class="flex w-[36px] justify-center"><svg class="w-6 h-6" viewBox="0 0 24 24"><path d="M6 2h16v7H6zM6 15h16v7H6zM9 18h9" fill="#fff" stroke="#555" stroke-width="1.400"/><path d="M4 12h20" stroke="#555" stroke-dasharray="2 2"/><path d="M0 9l4 3-4 3z" fill="#2b62c9"/></svg></span>
            <span class="flex w-[36px] justify-center"><svg class="w-6 h-6" viewBox="0 0 24 24" fill="none" stroke-width="6"><path d="M3 3l18 18" stroke="#e2547a"/><path d="M21 3L3 21" stroke="#2ea8a0"/></svg></span>
            <span class="flex w-[36px] justify-center"><svg class="w-7 h-6" viewBox="0 0 28 24" font-weight="bold" font-size="17"><path d="M1 3v19" stroke="#2b8be0" stroke-width="2"/><path d="M6 4h7l-4 6a5 5 0 1 1-4 8" fill="none" stroke="#e68a1c" stroke-width="2.400"/><path d="M25 4h-7l-1 7c5-2 8 1 7 5s-5 5-8 3" fill="none" stroke="#d9a90f" stroke-width="2.400"/><path d="M6 22h8" stroke="#3a9c4a" stroke-width="2"/><path d="M17 23h9" stroke="#e2423a" stroke-width="2"/></svg></span>
          </div>
        </div>

        <!-- edit area -->
        <div class="flex-1 bg-white"></div>

        <!-- status bar -->
        <div class="flex justify-between h-[37px] pl-[4px] pr-[2px] border-t border-[#ccc] text-[18px] leading-[40px]">
          <span class="text-[#111]">元素路径:</span>
          <span class="text-[#aaa] leading-[36px]">字数统计</span>
        </div>
      </div>
    </div>
  </div>
</main>

<!-- footer buttons -->
<footer class="mt-[34px] border-t-2 border-[#dcdfe6] pt-[13px] pl-[831px] flex gap-[22px]">
  <div class="flex items-center w-[151px] h-[53px] bg-[#00b49d] rounded-[5px] text-white text-[22px]">
    <span class="w-[109px] text-center tracking-[0.5px]">发 布</span>
    <span class="w-px h-[36px] bg-white/50"></span>
    <svg class="ml-[13px] w-[13px] h-[8px]" viewBox="0 0 14 8" fill="none" stroke="#fff" stroke-width="1.300"><path d="M1 1l6 6 6-6"/></svg>
  </div>
  <button class="w-[110px] h-[53px] bg-[#91949b] rounded-[5px] text-white text-[22px] tracking-[0.5px]">预 览</button>
  <button class="w-[110px] h-[53px] border border-[#dcdfe6] bg-white rounded-[5px] text-[#606266] text-[22px] tracking-[0.5px]">关 闭</button>
  <button class="flex items-center justify-center w-[53px] h-[53px] bg-[#91949b] rounded-full">
    <svg class="w-[20px] h-[20px]" viewBox="0 0 20 20" fill="none" stroke="#fff" stroke-width="1.500"><path d="M7.500 2h5l.8 2.200 2.300-.5 2.400 4.200-1.500 2.100 1.500 2.100-2.400 4.200-2.300-.5-.8 2.200h-5l-.8-2.200-2.300.5-2.400-4.200L3.500 10 2 7.900l2.400-4.200 2.300.5z"/><circle cx="10" cy="10" r="3"/></svg>
  </button>
</footer>

</body>
</html>
